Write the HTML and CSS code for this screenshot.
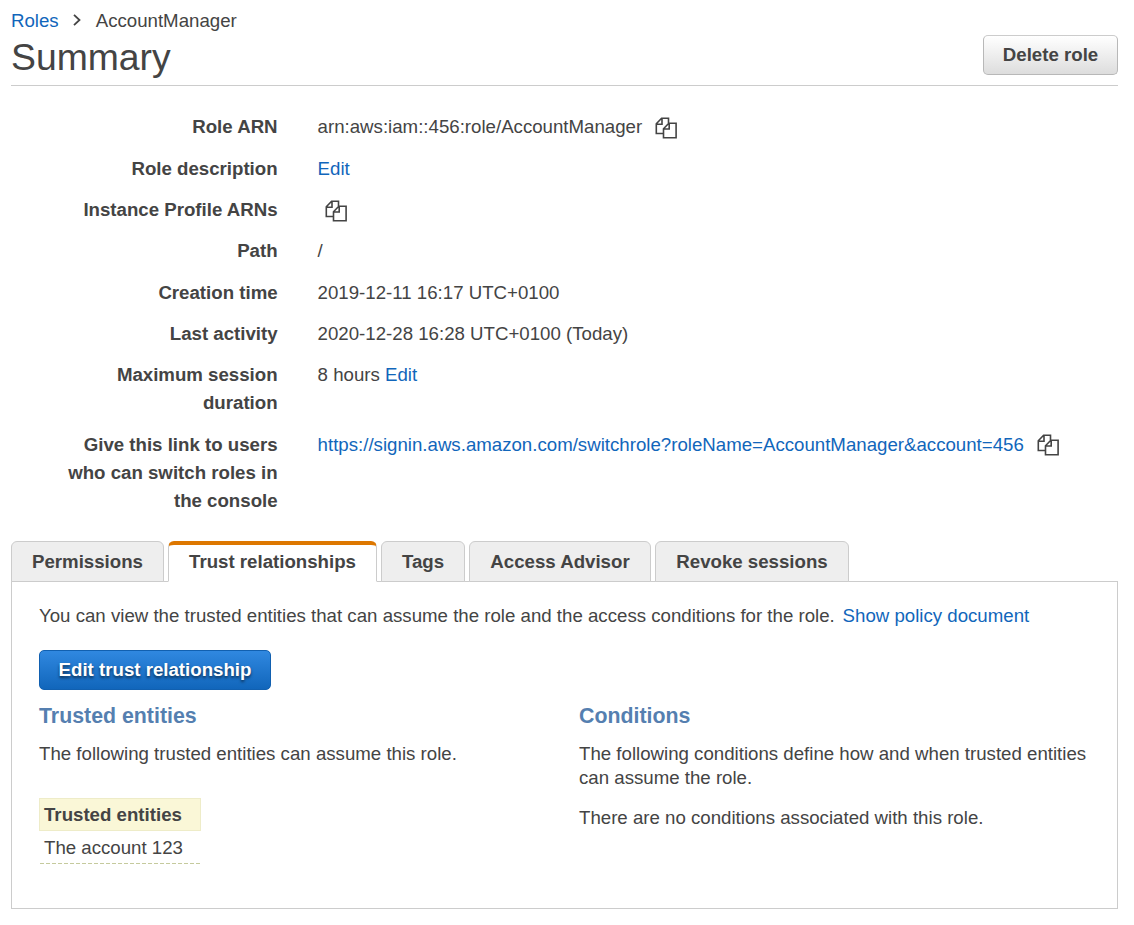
FILE: index.html
```html
<!DOCTYPE html>
<html lang="en">
<head>
<meta charset="utf-8">
<title>Role summary</title>
<link rel="stylesheet" href="styles.css">
</head>
<body>
<svg class="sprite" aria-hidden="true">
  <symbol id="copy" viewBox="0 0 22 22">
    <path d="M8.500 16.500H1.300V6.800L6.600 1.200H13.500V6M1.500 7.200H7V1.500" />
    <path d="M8.500 20.700V11.700L13.800 6.200H21.100V20.700ZM8.800 12H14.200V6.500" />
  </symbol>
</svg>
<main class="page">
  <header class="header">
    <div class="heading">
      <nav class="crumbs">
        <a href="#">Roles</a>
        <svg class="chevron" viewBox="0 0 8 12"><path d="M1 .8L6.500 6L1 11.200" /></svg>
        <span>AccountManager</span>
      </nav>
      <h1 class="title">Summary</h1>
    </div>
    <button class="button delete">Delete role</button>
  </header>
  <dl class="details">
    <dt>Role ARN</dt><dd><span>arn:aws:iam::456:role/AccountManager</span><svg class="copy"><use href="#copy" /></svg></dd>
    <dt>Role description</dt><dd><a href="#">Edit</a></dd>
    <dt>Instance Profile ARNs</dt><dd><svg class="copy lone"><use href="#copy" /></svg></dd>
    <dt>Path</dt><dd>/</dd>
    <dt>Creation time</dt><dd>2019-12-11 16:17 UTC+0100</dd>
    <dt>Last activity</dt><dd>2020-12-28 16:28 UTC+0100 (Today)</dd>
    <dt>Maximum session duration</dt><dd>8 hours&nbsp;<a href="#">Edit</a></dd>
    <dt>Give this link to users who can switch roles in the console</dt><dd><a href="#">https://signin.aws.amazon.com/switchrole?roleName=AccountManager&amp;account=456</a><svg class="copy"><use href="#copy" /></svg></dd>
  </dl>
  <nav class="tabs">
    <a class="tab permissions">Permissions</a>
    <a class="tab trust active">Trust relationships</a>
    <a class="tab tags">Tags</a>
    <a class="tab advisor">Access Advisor</a>
    <a class="tab revoke">Revoke sessions</a>
  </nav>
  <section class="panel">
    <p class="intro">You can view the trusted entities that can assume the role and the access conditions for the role. <a href="#">Show policy document</a></p>
    <button class="button primary">Edit trust relationship</button>
    <div class="columns">
      <section>
        <h2 class="subtitle">Trusted entities</h2>
        <p class="text">The following trusted entities can assume this role.</p>
        <table class="entities">
          <thead><tr><th>Trusted entities</th></tr></thead>
          <tbody><tr><td>The account 123</td></tr></tbody>
        </table>
      </section>
      <section>
        <h2 class="subtitle">Conditions</h2>
        <p class="text">The following conditions define how and when trusted entities can assume the role.</p>
        <p class="text">There are no conditions associated with this role.</p>
      </section>
    </div>
  </section>
</main>
</body>
</html>
```
FILE: styles.css
```css
* { box-sizing: border-box; }
body {
  margin: 0;
  background: #fff;
  color: #444;
  font: 18.667px/24px "Liberation Sans", Arial, sans-serif;
}
a { color: #1166bb; text-decoration: none; }
h1, h2, p, dl, dd { margin: 0; }
.sprite { display: none; }
.page { padding: 9px 16px 16px 11px; }
.header {
  display: flex;
  justify-content: space-between;
  align-items: flex-end;
  height: 77px;
  padding-bottom: 10px;
  border-bottom: 1px solid #ccc;
}
.heading { align-self: flex-start; }
.crumbs { display: flex; align-items: center; height: 24px; }
.chevron { width: 8px; height: 12px; margin: 0 15px 2px 14px; fill: none; stroke: #444; stroke-width: 1.8; }
.title { font-size: 37.333px; font-weight: 400; line-height: 48px; }
.button {
  height: 40px;
  padding: 0 0 1px;
  border-radius: 5px;
  font: bold 18.667px "Liberation Sans", Arial, sans-serif;
}
.delete {
  width: 135px;
  color: #444;
  border: 1px solid #b8b8b8;
  border-top-color: #ccc;
  background: linear-gradient(#fff, #ddd);
}
.primary {
  display: block;
  width: 232px;
  padding: 1px 0 0;
  color: #fff;
  border: 1px solid #1160b0;
  background: linear-gradient(#3088e0, #1166bb);
  text-shadow: 0 2px 3px rgba(0, 0, 0, .6);
}
.details {
  display: grid;
  grid-template-columns: 266.6px 1fr;
  column-gap: 40px;
  row-gap: 13.333px;
  padding: 27.35px 0 26.32px;
  line-height: 28px;
}
.details dt { padding-left: 50px; font-weight: bold; text-align: right; }
.details dd { display: flex; align-items: flex-start; white-space: nowrap; }
.copy { flex: none; width: 22px; height: 22px; margin: 3.5px 0 0 13px; fill: none; stroke: #444; stroke-width: 1.600; }
.copy.lone { margin-left: 7.4px; }
.tabs { display: flex; gap: 4px; height: 41px; margin-bottom: -1px; }
.tab {
  flex: none;
  height: 41px;
  border: 1px solid #ccc;
  border-radius: 6px 6px 0 0;
  background: #eee;
  color: #444;
  font-weight: bold;
  line-height: 39px;
  text-align: center;
}
.active {
  position: relative;
  border-top: 4px solid #dd7700;
  border-bottom-color: #fff;
  background: #fff;
  line-height: 33px;
}
.permissions { width: 153px; }
.trust { width: 209px; }
.tags { width: 84px; }
.advisor { width: 182px; }
.revoke { width: 194px; }
.panel { height: 328px; padding: 22px 27px; border: 1px solid #ccc; }
.intro { margin-bottom: 22px; }
.intro a { margin-left: 2.600px; }
.columns { display: grid; grid-template-columns: 513px 513px; column-gap: 27px; padding-top: 12px; }
.subtitle { margin-bottom: 12px; color: #557fb0; font-size: 21.333px; line-height: 28px; }
.text { margin-bottom: 16px; }
.entities { width: 162px; margin-top: 32px; border-collapse: separate; border-spacing: 0; }
.entities th { height: 33px; padding: 2px 4px 0; border: 1px solid #eeecc8; background: #faf7d7; text-align: left; }
.entities td {
  height: 33px;
  padding: 2px 5px 0;
  background: repeating-linear-gradient(90deg, #c5ca9d 0 4px, transparent 4px 6px) 1px 100% / 162px 1px no-repeat;
}
```
